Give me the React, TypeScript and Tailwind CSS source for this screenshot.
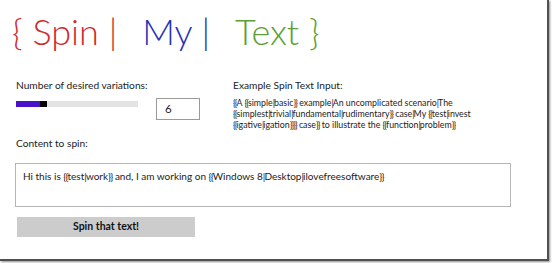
// squeeze braces and pipes, they run much tighter in the original font
function Spun({ text }: { text: string }) {
  const parts = text.split(/([{}|])/)
  return (
    <>
      {parts.map((p, i) =>
        p === '{' || p === '}' || p === '|' ? (
          <span key={i} className="tracking-[-0.9px]">{p}</span>
        ) : (
          <span key={i}>{p}</span>
        )
      )}
    </>
  )
}

export default function App() {
  return (
    <div className="w-[552px] h-[263px] bg-white overflow-hidden" style={{ fontFamily: 'Lato, "Noto Sans", sans-serif' }}>
      <div className="w-[549px] h-[261px] bg-white border-r-[2px] border-b-[2px] border-[#505050] shadow-[1px_1px_2px_rgba(0,0,0,0.45)]">
        {/* Title */}
        <div className="pl-[12px] pt-[10px] h-[64px] text-[36px] leading-[42px] font-light whitespace-pre flex">
          <span className="text-[#d2292d]">{'{ Spin |'}</span>
          <span className="text-[#2433b3] ml-[25px]">{'My |'}</span>
          <span className="text-[#5b9f34] ml-[25px]">{'Text }'}</span>
        </div>

        <div className="flex text-[10.2px] text-[#222]">
          {/* Left column */}
          <div className="w-[233px] pl-[16px]">
            <div className="mt-[14px] leading-[14px]">Number of desired variations:</div>
            <div className="flex items-start mt-[6px]">
              <div className="mt-[3px] w-[122px] h-[6px] bg-[#e3e3e3] flex">
                <div className="w-[24px] h-full bg-[#4a12c8]" />
                <div className="w-[7px] h-full bg-black" />
              </div>
              <div className="ml-[18px] w-[44px] h-[22px] border border-[#9a9a9a] flex items-center pl-[8px] text-[11.5px]">6</div>
            </div>
          </div>
          {/* Right column */}
          <div className="flex-1">
            <div className="mt-[14px] leading-[14px]">Example Spin Text Input:</div>
            <div className="mt-[5px] leading-[11px] text-[8.8px] whitespace-nowrap">
              <div><Spun text="{{A {{simple|basic}} example|An uncomplicated scenario|The" /></div>
              <div><Spun text="{{simplest|trivial|fundamental|rudimentary}} case|My {{test|invest" /></div>
              <div><Spun text="{{igative|igation}}}} case}} to illustrate the {{function|problem}}" /></div>
            </div>
          </div>
        </div>

        <div className="pl-[16px] mt-[6px] text-[10.2px] leading-[14px] text-[#222]">Content to spin:</div>
        <div className="ml-[15px] mt-[13px] w-[496px] h-[44px] border border-[#b5b5b5] px-[7px] py-[5px] text-[10px] leading-[14px] text-[#222] whitespace-nowrap">
          <Spun text="Hi this is {{test|work}} and, I am working on {{Windows 8|Desktop|ilovefreesoftware}}" />
        </div>
        <div className="ml-[17px] mt-[10px] w-[178px] h-[20px] bg-[#cccccc] flex items-center justify-center text-[10.5px] font-bold text-[#111]">
          Spin that text!
        </div>
      </div>
    </div>
  )
}
